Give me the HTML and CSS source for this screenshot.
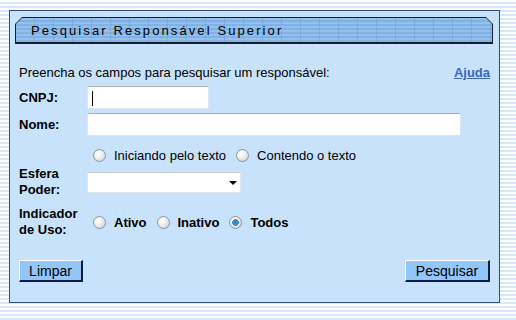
FILE: index.html
```html
<!DOCTYPE html>
<html lang="pt-BR">
<head>
    <meta charset="UTF-8">
    <title>Pesquisar Responsável Superior</title>
    <link rel="stylesheet" href="styles.css">
</head>
<body>
    <div class="panel">
        <div class="title-bar">
            <div class="title-fill">Pesquisar Responsável Superior</div>
        </div>

        <form class="form">
            <div class="intro">
                <span>Preencha os campos para pesquisar um responsável:</span>
                <a href="#" class="help">Ajuda</a>
            </div>

            <div class="row row-cnpj">
                <label class="label">CNPJ:</label>
                <input type="text" class="field field-cnpj caret">
            </div>

            <div class="row row-nome">
                <label class="label">Nome:</label>
                <input type="text" class="field field-nome">
            </div>

            <div class="row row-match">
                <span class="label"></span>
                <div class="options">
                    <label class="option"><input type="radio" name="tipo" class="radio"> Iniciando pelo texto</label>
                    <label class="option"><input type="radio" name="tipo" class="radio"> Contendo o texto</label>
                </div>
            </div>

            <div class="row row-esfera">
                <label class="label">Esfera<br>Poder:</label>
                <div class="select-wrap">
                    <select class="select"><option></option></select>
                </div>
            </div>

            <div class="row row-uso">
                <label class="label">Indicador<br>de Uso:</label>
                <div class="options bold">
                    <label class="option"><input type="radio" name="uso" class="radio"> Ativo</label>
                    <label class="option"><input type="radio" name="uso" class="radio"> Inativo</label>
                    <label class="option"><input type="radio" name="uso" class="radio" checked> Todos</label>
                </div>
            </div>

            <div class="buttons">
                <button type="button" class="btn">Limpar</button>
                <button type="button" class="btn">Pesquisar</button>
            </div>
        </form>
    </div>
</body>
</html>
```

FILE: styles.css
```css
body {
    margin: 0;
    padding: 10px 0 0 9px;
    height: 310px;
    font-family: Arial, "Liberation Sans", sans-serif;
    font-size: 13px;
    color: #000;
    background: repeating-linear-gradient(#ffffff 0, #ffffff 2px, #d6e7f7 2px, #d6e7f7 4px);
}
.panel {
    width: 489px;
    height: 291px;
    border: 1px solid #34506e;
    background: #c9e2fb;
}
.title-bar {
    margin: 6px 6px 0 5px;
    height: 27px;
    padding: 1px 1px 2px 1px;
    box-sizing: border-box;
    background: #16212d;
    clip-path: polygon(7px 0, calc(100% - 7px) 0, 100% 7px, 100% 100%, 0 100%, 0 7px);
}
.title-fill {
    height: 100%;
    padding-left: 15px;
    line-height: 25px;
    font-size: 13px;
    letter-spacing: 2.1px;
    color: #000;
    background:
        repeating-linear-gradient(90deg, transparent 0, transparent 18px, rgba(90,130,180,0.25) 18px, rgba(90,130,180,0.25) 19px),
        repeating-linear-gradient(#93c0ee 0, #93c0ee 2px, #82b2e4 2px, #82b2e4 4px);
    clip-path: polygon(6px 0, calc(100% - 6px) 0, 100% 6px, 100% 100%, 0 100%, 0 6px);
}
.form {
    padding: 0 9px;
}
.intro {
    display: flex;
    justify-content: space-between;
    margin-top: 21px;
    height: 15px;
    line-height: 15px;
}
.help {
    color: #3767c8;
    font-weight: bold;
    text-decoration: underline;
}
.row {
    display: flex;
    align-items: center;
}
.label {
    width: 68px;
    flex: none;
    font-weight: bold;
    line-height: 16px;
}
.row-cnpj { margin-top: 6px; }
.row-nome { margin-top: 4px; }
.row-match { margin-top: 10px; }
.row-esfera { margin-top: 2px; }
.row-uso { margin-top: 8px; }
.field {
    height: 23px;
    box-sizing: border-box;
    border: 1px solid #e1e6ec;
    border-top-color: #a7adb4;
    border-radius: 2px;
    background: #fff;
    padding: 0 4px;
    font: inherit;
    outline: none;
}
.field-cnpj { width: 122px; }
.field-nome { width: 374px; }
.caret {
    background: linear-gradient(#000, #000) no-repeat 4px 4px / 1px 15px, #fff;
}
.options {
    display: flex;
    align-items: center;
    height: 18px;
    margin-left: 6px;
}
.option {
    display: flex;
    align-items: center;
    margin-right: 10px;
}
.bold { font-weight: bold; }
.radio {
    appearance: none;
    width: 13px;
    height: 13px;
    margin: 0 8px 0 0;
    border-radius: 50%;
    border: 1px solid #8f959c;
    box-sizing: border-box;
    background: radial-gradient(circle at 35% 35%, #ffffff 0, #f2f2f2 35%, #c9cbce 100%);
}
.radio:checked {
    background:
        radial-gradient(circle, #1a73c0 0, #3a9be0 2px, #2b79bd 3px, transparent 3.6px),
        radial-gradient(circle at 35% 35%, #ffffff 0, #f2f2f2 35%, #c9cbce 100%);
}
.select-wrap {
    position: relative;
    width: 154px;
    height: 21px;
}
.select {
    appearance: none;
    width: 100%;
    height: 100%;
    border: 1px solid #e1e6ec;
    border-top-color: #c3c8ce;
    border-radius: 2px;
    background: #fff;
    font: inherit;
    outline: none;
}
.select-wrap::after {
    content: "";
    position: absolute;
    right: 4px;
    top: 9px;
    border-left: 4px solid transparent;
    border-right: 4px solid transparent;
    border-top: 4px solid #000;
}
.buttons {
    display: flex;
    justify-content: space-between;
    margin-top: 22px;
}
.btn {
    height: 22px;
    padding: 0 9px;
    font-family: Arial, "Liberation Sans", sans-serif;
    font-size: 14px;
    color: #000;
    background: #92c6f8;
    border: 1px solid;
    border-color: #ffffff #0f1c4a #0f1c4a #ffffff;
    border-width: 1px 2px 2px 1px;
    border-radius: 0;
}
.btn:first-child { width: 64px; }
.btn:last-child { width: 85px; }
```
